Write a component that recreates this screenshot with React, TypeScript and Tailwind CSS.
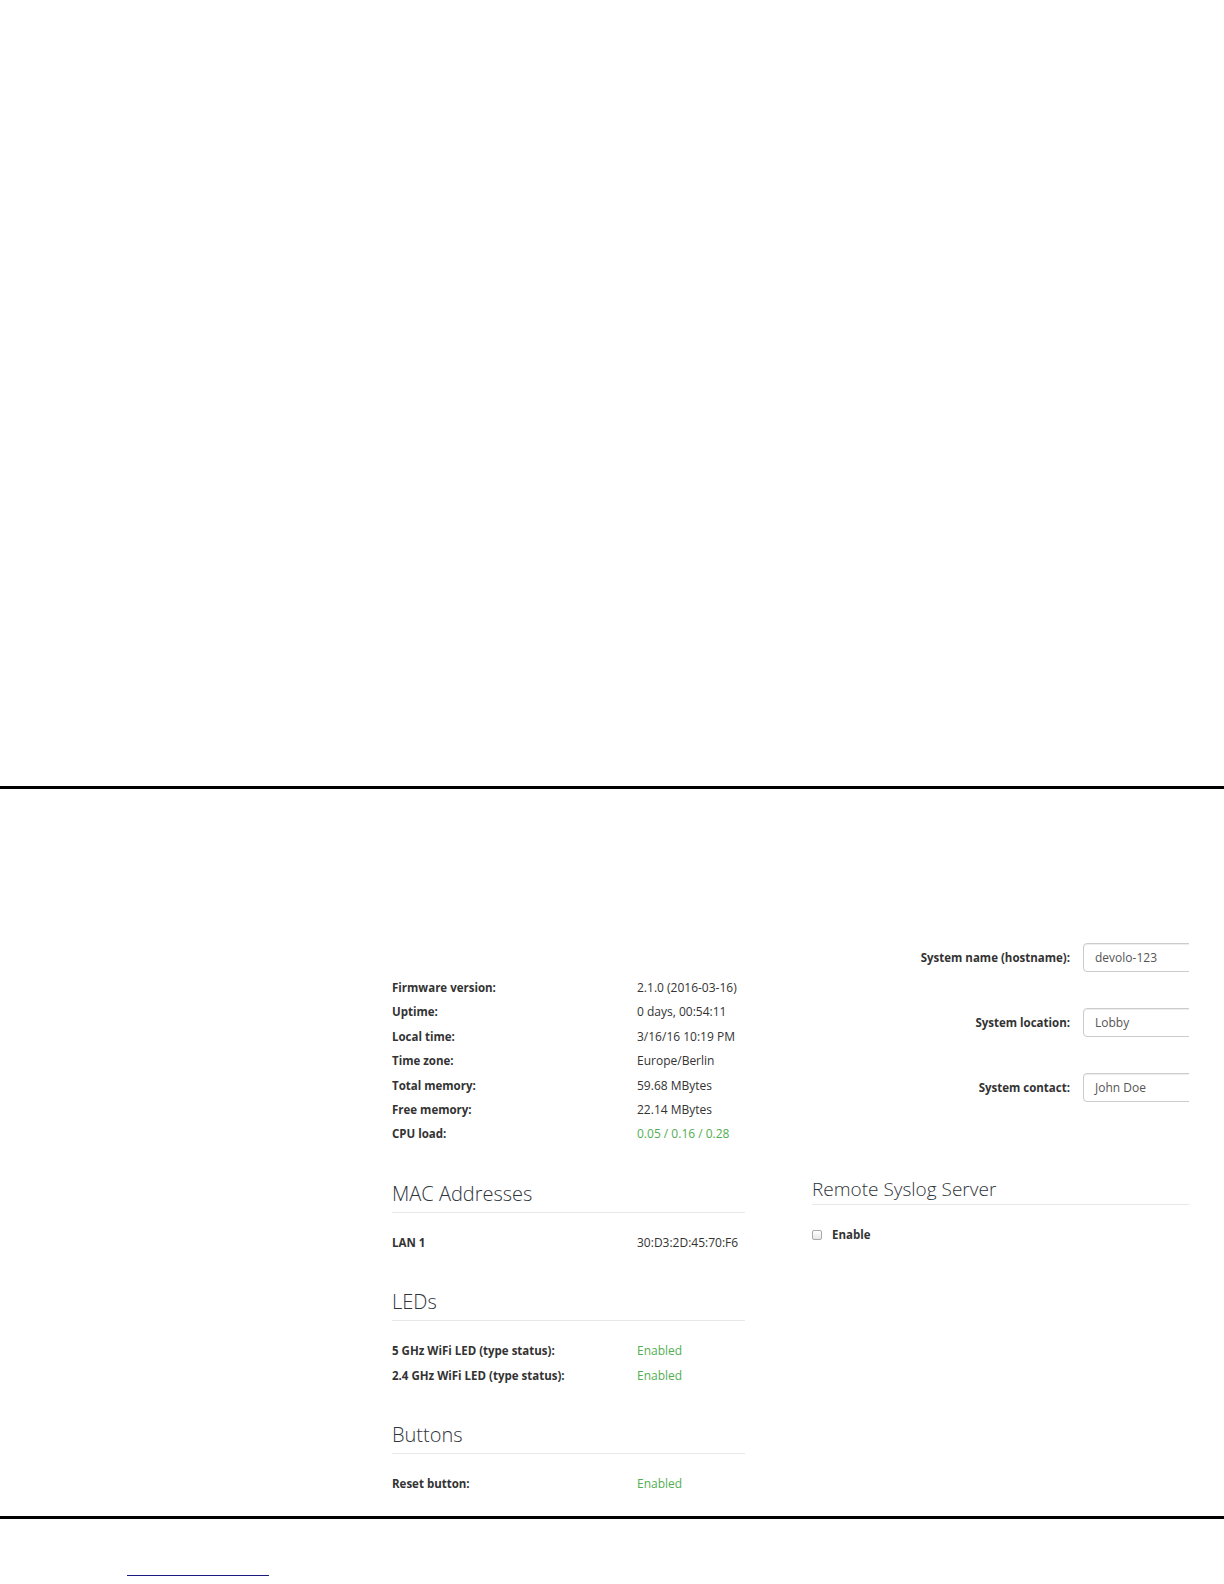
import React from "react";

const font = { fontFamily: "'Open Sans', 'Liberation Sans', sans-serif" };

function Row({ label, value, green }: { label: string; value: string; green?: boolean }) {
  return (
    <div className="grid grid-cols-[245px_1fr] leading-[24.4px] text-[12px]">
      <div className="font-bold text-[11.5px] text-[#333]">{label}</div>
      <div className={green ? "text-[#52ad52]" : "text-[#333]"}>{value}</div>
    </div>
  );
}

function Heading({ children }: { children: React.ReactNode }) {
  return (
    <div className="mt-[35px] pb-[6px] border-b border-[#e8e8e8] text-[20px] leading-[24px] font-light text-[#2f343a]">
      {children}
    </div>
  );
}

function Field({ label, value }: { label: string; value: string }) {
  return (
    <div className="flex items-center h-[29px] mb-[36px]">
      <div className="w-[258px] shrink-0 text-right font-bold text-[11.5px] text-[#333]">{label}</div>
      <div className="ml-[13px] w-[200px] shrink-0 h-[29px] border border-[#cccccc] rounded-[4px] shadow-[inset_0_1px_1px_rgba(0,0,0,0.075)] flex items-center pl-[11px] text-[12px] text-[#555]">
        {value}
      </div>
    </div>
  );
}

export default function App() {
  return (
    <div className="w-[1224px] h-[1584px] bg-white overflow-hidden" style={font}>
      <div className="h-[786px]" />
      <div className="h-[3px] bg-black" />
      <div className="h-[727px] flex items-start overflow-hidden">
        <div className="ml-[392px] w-[353px] shrink-0 pt-[187px]">
          <Row label="Firmware version:" value="2.1.0 (2016-03-16)" />
          <Row label="Uptime:" value="0 days, 00:54:11" />
          <Row label="Local time:" value="3/16/16 10:19 PM" />
          <Row label="Time zone:" value="Europe/Berlin" />
          <Row label="Total memory:" value="59.68 MBytes" />
          <Row label="Free memory:" value="22.14 MBytes" />
          <Row label="CPU load:" value="0.05 / 0.16 / 0.28" green />

          <Heading>MAC Addresses</Heading>
          <div className="mt-[18px]">
            <Row label="LAN 1" value="30:D3:2D:45:70:F6" />
          </div>

          <Heading>LEDs</Heading>
          <div className="mt-[18px]">
            <Row label="5 GHz WiFi LED (type status):" value="Enabled" green />
            <Row label="2.4 GHz WiFi LED (type status):" value="Enabled" green />
          </div>

          <Heading>Buttons</Heading>
          <div className="mt-[18px]">
            <Row label="Reset button:" value="Enabled" green />
          </div>
        </div>

        <div className="ml-[67px] w-[377px] shrink-0 overflow-hidden pt-[154px]">
          <Field label="System name (hostname):" value="devolo-123" />
          <Field label="System location:" value="Lobby" />
          <Field label="System contact:" value="John Doe" />

          <div className="mt-[75px] pb-[3px] border-b border-[#e8e8e8] text-[19px] leading-[24px] font-light text-[#2f343a]">
            Remote Syslog Server
          </div>
          <div className="mt-[18px] flex items-center h-[24px]">
            <span className="w-[10px] h-[10px] border border-[#a9a9a9] rounded-[2px] bg-gradient-to-b from-[#ffffff] to-[#e6e6e6]" />
            <span className="ml-[10px] font-bold text-[11.5px] text-[#333]">Enable</span>
          </div>
        </div>
      </div>
      <div className="h-[3px] bg-black" />
      <div className="mt-[56px] ml-[127px] w-[142px] h-[1px] bg-[#1a1a80]" />
    </div>
  );
}
